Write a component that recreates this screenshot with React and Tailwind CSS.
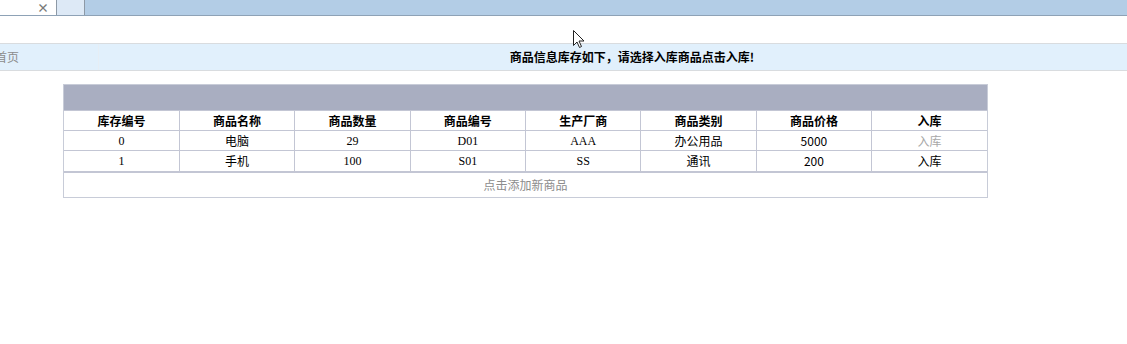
import React from 'react';

const cols = ['库存编号', '商品名称', '商品数量', '商品编号', '生产厂商', '商品类别', '商品价格', '入库'];

const rows = [
  { id: '0', name: '电脑', qty: '29', code: 'D01', maker: 'AAA', type: '办公用品', price: '5000', muted: true },
  { id: '1', name: '手机', qty: '100', code: 'S01', maker: 'SS', type: '通讯', price: '200', muted: false },
];

const serif = { fontFamily: '"Liberation Serif", "Noto Sans CJK SC", serif' };

export default function App() {
  return (
    <div className="w-[1127px] h-[344px] bg-white relative overflow-hidden text-[12px] text-black" style={{ fontFamily: '"Noto Sans CJK SC", sans-serif' }}>
      {/* tab strip */}
      <div className="flex h-[16px] bg-[#b3cde6] border-b border-[#8ea2b6]">
        <div className="w-[57px] bg-white border-r border-[#8d99a6] flex items-center justify-end pr-[7px] text-[#7a7a7a] text-[12px] font-bold leading-[15px]">×</div>
        <div className="w-[28px] bg-[#dde9f6] border-r border-[#8d99a6]"></div>
      </div>

      <div className="h-[27px]"></div>

      {/* title bar */}
      <div className="h-[28px] bg-[#e1f0fc] border-y border-[#d9dcdf] flex items-center">
        <div className="w-[104px] h-full border-r border-[#e6eef5] flex items-center -ml-[5px] text-[#8c8c8c] text-[12px]">首页</div>
        <div className="flex-1 text-center font-bold text-[12px] pl-[38px]">商品信息库存如下，请选择入库商品点击入库!</div>
      </div>

      {/* table */}
      <div className="ml-[63px] mt-[13px] w-[925px] border border-[#c8ccd8]">
        <div className="h-[25px] bg-[#a9aec1]"></div>
        <table className="w-full border-collapse table-fixed">
          <thead>
            <tr className="h-[20px]">
              {cols.map((c) => (
                <th key={c} className="border-t border-r last:border-r-0 border-[#c3c6d4] font-bold text-[12px] p-0 leading-none">{c}</th>
              ))}
            </tr>
          </thead>
          <tbody>
            {rows.map((r) => (
              <tr key={r.id} className="h-[20px] text-center">
                <td className="border-t border-r border-[#c3c6d4] p-0 leading-none" style={serif}>{r.id}</td>
                <td className="border-t border-r border-[#c3c6d4] p-0 leading-none">{r.name}</td>
                <td className="border-t border-r border-[#c3c6d4] p-0 leading-none" style={serif}>{r.qty}</td>
                <td className="border-t border-r border-[#c3c6d4] p-0 leading-none" style={serif}>{r.code}</td>
                <td className="border-t border-r border-[#c3c6d4] p-0 leading-none" style={serif}>{r.maker}</td>
                <td className="border-t border-r border-[#c3c6d4] p-0 leading-none">{r.type}</td>
                <td className="border-t border-r border-[#c3c6d4] p-0 leading-none">{r.price}</td>
                <td className={`border-t border-[#c3c6d4] p-0 leading-none ${r.muted ? 'text-[#a8a8a8]' : ''}`}>入库</td>
              </tr>
            ))}
          </tbody>
        </table>
        <div className="h-[26px] border-t-2 border-[#c3c6d4] flex items-center justify-center text-[#8c8c8c]">点击添加新商品</div>
      </div>

      {/* mouse cursor */}
      <svg className="absolute left-[573px] top-[30px]" width="12" height="19" viewBox="0 0 12 19">
        <path d="M0.5 0.5 L0.5 15.5 L4 12 L6.5 17.5 L8.5 16.5 L6 11 L11 11 Z" fill="white" stroke="#222" strokeWidth="1" />
      </svg>
    </div>
  );
}
